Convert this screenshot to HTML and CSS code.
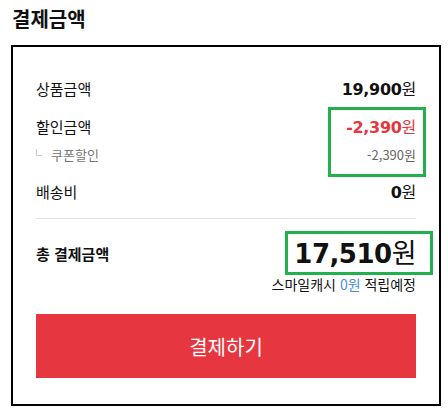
FILE: index.html
```html
<!DOCTYPE html>
<html lang="ko">
<head>
    <meta charset="UTF-8">
    <meta name="viewport" content="width=device-width, initial-scale=1.0">
    <title>결제금액</title>
    <link rel="stylesheet" href="styles.css">
</head>
<body>
    <h2 class="pay-title">결제금액</h2>
    <div class="pay-box">
        <div class="pay-row">
            <span class="label">상품금액</span>
            <span class="amount">19,900<em>원</em></span>
        </div>
        <div class="pay-row discount">
            <span class="label">할인금액</span>
            <span class="amount red">-2,390<em>원</em></span>
        </div>
        <div class="pay-row sub">
            <span class="label"><i class="sub-mark"></i>쿠폰할인</span>
            <span class="sub-amount">-2,390원</span>
        </div>
        <div class="pay-row delivery">
            <span class="label">배송비</span>
            <span class="amount">0<em>원</em></span>
        </div>
        <div class="divider"></div>
        <div class="pay-row total">
            <span class="label">총 결제금액</span>
            <span class="total-amount">17,510<em>원</em></span>
        </div>
        <p class="cash">스마일캐시 <span class="blue">0원</span> 적립예정</p>
        <button class="pay-button">결제하기</button>

        <!-- highlight marks -->
        <div class="mark mark-discount"></div>
        <div class="mark mark-total"></div>
    </div>
</body>
</html>
```

FILE: styles.css
```css
body {
    margin: 0;
    background-color: #ffffff;
    color: #111;
    font-family: "Noto Sans CJK KR", "Noto Sans", sans-serif;
}
.pay-title {
    margin: 0;
    padding: 5px 12px 0;
    height: 40px;
    font-size: 20px;
    line-height: 28px;
    font-weight: bold;
}
.pay-box {
    position: relative;
    margin-left: 11px;
    width: 380px;
    padding: 28px 23px 26px;
    border: 2px solid #000;
}
.pay-row {
    display: flex;
    justify-content: space-between;
    align-items: center;
    height: 26px;
}
.pay-row .label {
    font-size: 15px;
    display: flex;
    align-items: center;
}
.amount {
    font-family: "DejaVu Sans", "Noto Sans CJK KR", sans-serif;
    font-size: 16px;
    font-weight: bold;
    letter-spacing: -0.3px;
}
.amount em,
.total-amount em {
    font-style: normal;
    font-weight: normal;
    font-family: "Noto Sans CJK KR", sans-serif;
}
.red {
    color: #e63740;
}
.discount {
    margin-top: 12px;
}
.sub {
    margin-top: 6px;
    height: 18px;
}
.sub .label {
    font-size: 13px;
    color: #777;
}
.sub-mark {
    display: inline-block;
    width: 5px;
    height: 6px;
    margin: -4px 9px 0 0;
    border-left: 1px solid #ccc;
    border-bottom: 1px solid #ccc;
}
.sub-amount {
    font-size: 13px;
    color: #666;
}
.delivery {
    margin-top: 15px;
}
.divider {
    margin-top: 14px;
    height: 1px;
    background-color: #e6e6e6;
}
.total {
    margin-top: 15px;
    height: 34px;
}
.total .label {
    font-weight: bold;
    margin-top: 4px;
}
.total-amount {
    font-family: "DejaVu Sans", "Noto Sans CJK KR", sans-serif;
    font-size: 26px;
    font-weight: bold;
    letter-spacing: -0.5px;
}
.total-amount em {
    font-size: 27px;
}
.cash {
    margin: 7px 0 0;
    text-align: right;
    font-size: 14px;
    line-height: 18px;
}
.blue {
    color: #4a8ee6;
}
.pay-button {
    display: block;
    width: 100%;
    height: 64px;
    margin-top: 21px;
    border: none;
    background-color: #e63740;
    color: #fff;
    font-family: "Noto Sans CJK KR", sans-serif;
    font-size: 20px;
    cursor: pointer;
}
.mark {
    position: absolute;
    border: 3px solid #22b14c;
    box-sizing: border-box;
}
.mark-discount {
    left: 315px;
    top: 60px;
    width: 98px;
    height: 70px;
}
.mark-total {
    left: 272px;
    top: 184px;
    width: 148px;
    height: 44px;
}
```
